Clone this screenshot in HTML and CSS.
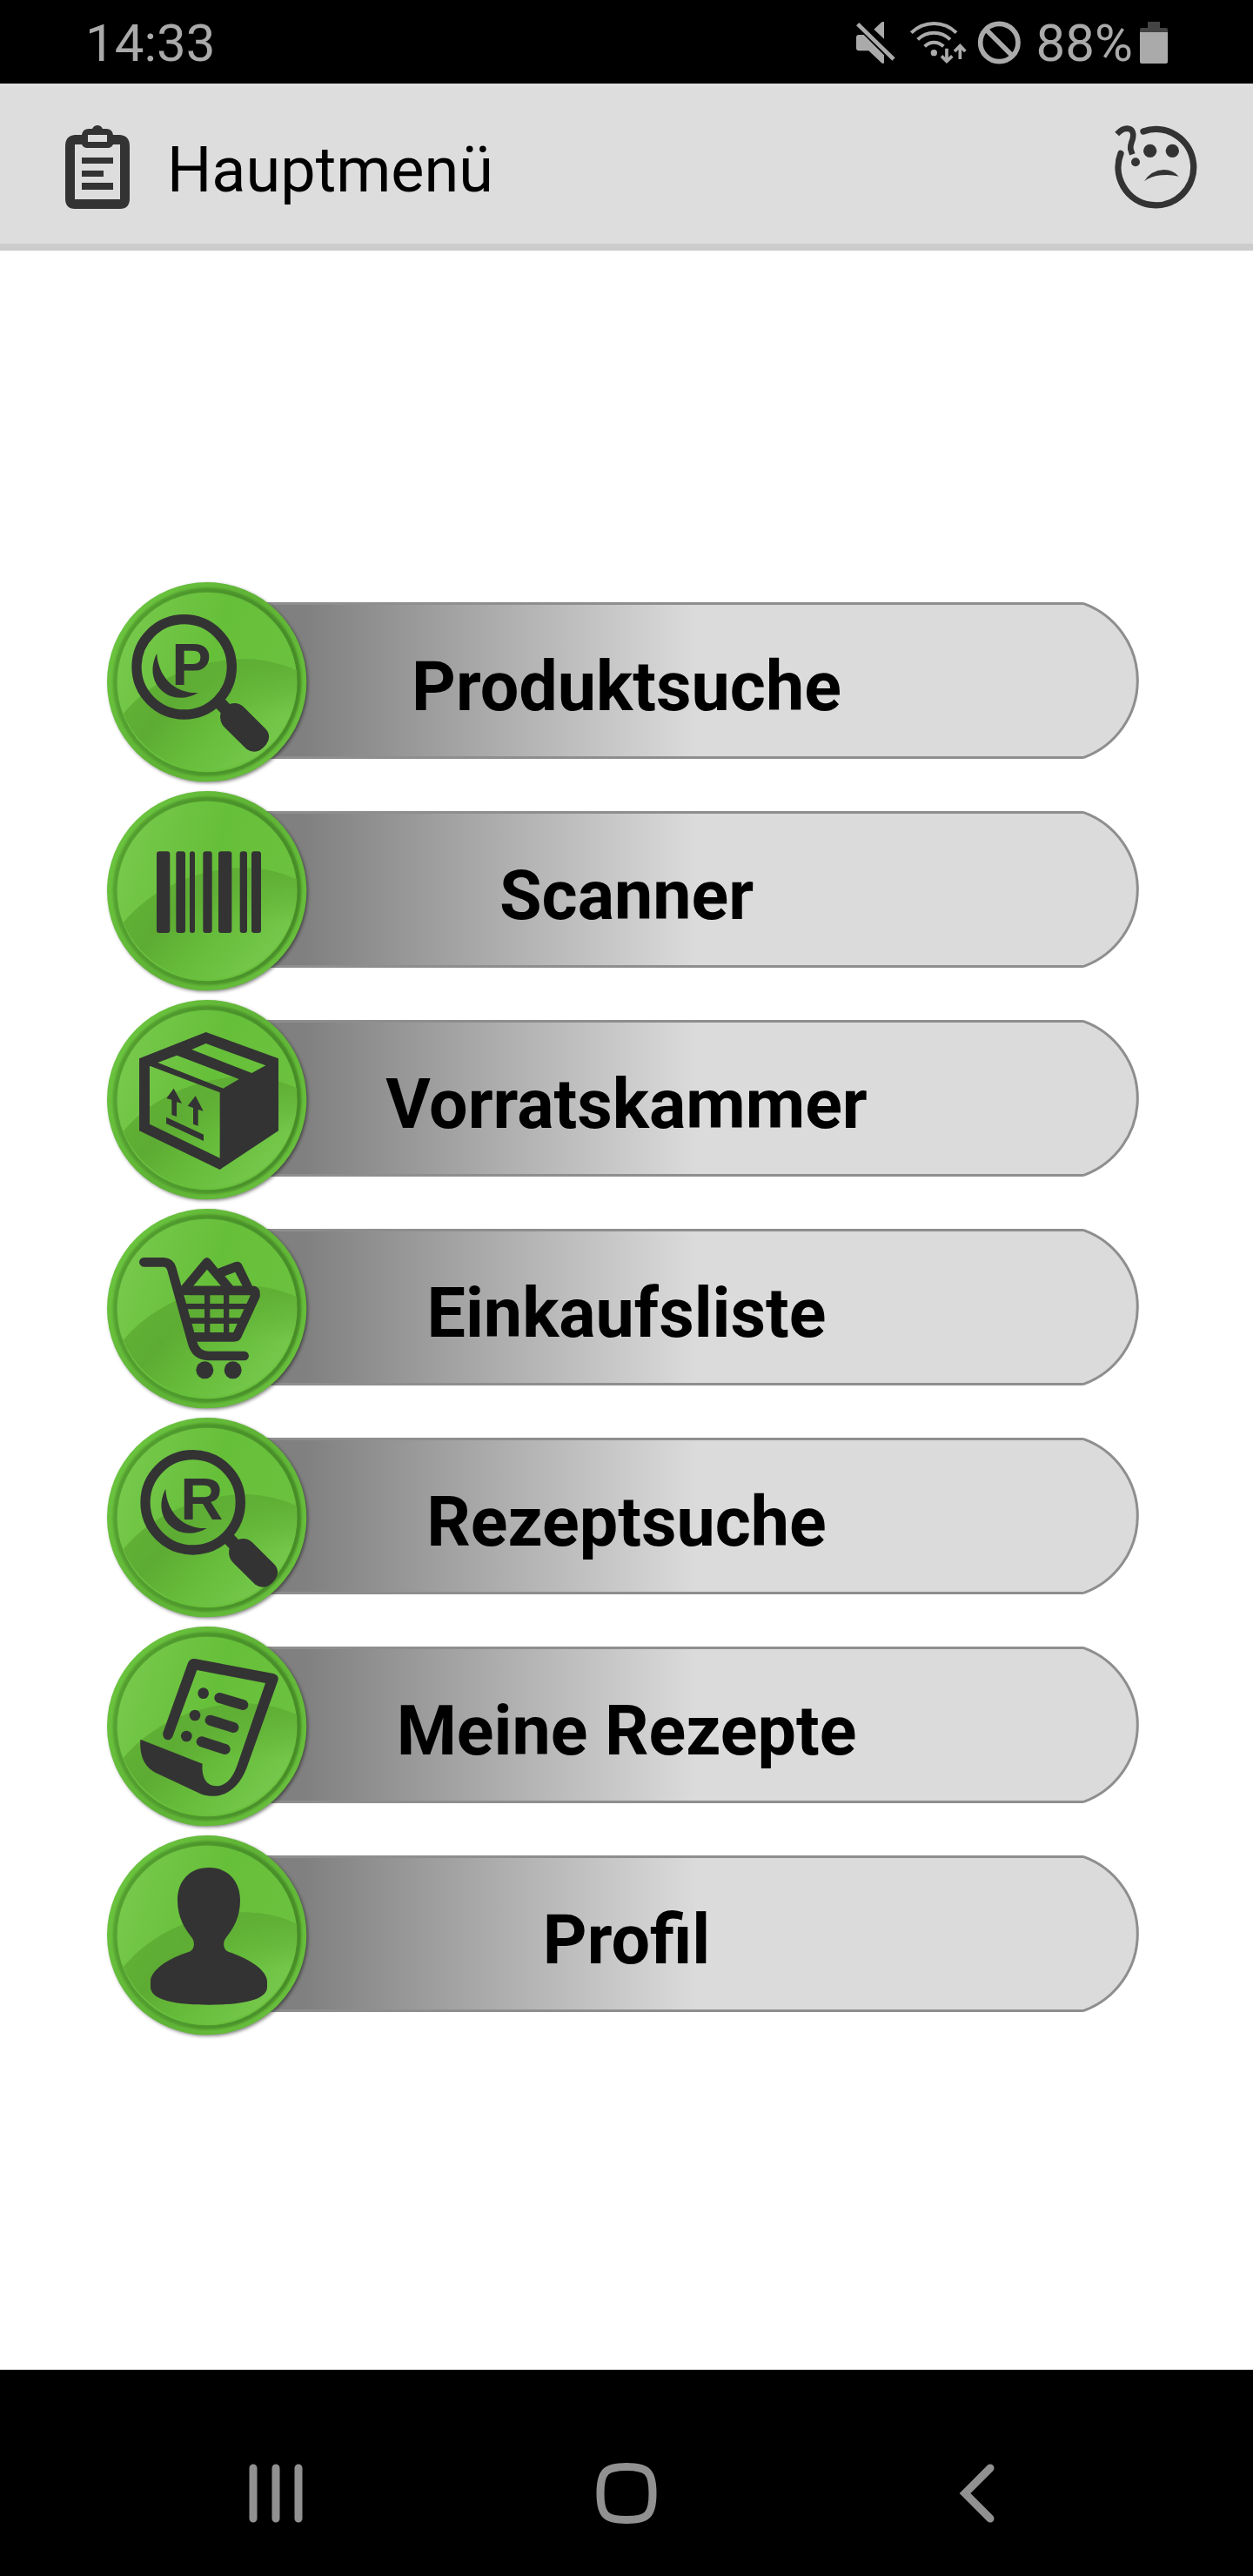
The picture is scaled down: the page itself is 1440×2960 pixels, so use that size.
FILE: index.html
```html
<!DOCTYPE html>
<html lang="de">
<head>
<meta charset="utf-8">
<meta name="viewport" content="width=device-width, initial-scale=1">
<title>Hauptmenü</title>
<link rel="stylesheet" href="styles.css">
</head>
<body>
<svg class="defs" aria-hidden="true">
  <defs>
    <linearGradient id="rim" x1="0" y1="0.2" x2="1" y2="0.8">
      <stop offset="0" stop-color="#6cc63f"/>
      <stop offset="0.5" stop-color="#5fb336"/>
      <stop offset="1" stop-color="#69c03d"/>
    </linearGradient>
    <linearGradient id="groove" x1="0" y1="0" x2="1" y2="0">
      <stop offset="0" stop-color="#54a030"/>
      <stop offset="1" stop-color="#468c28"/>
    </linearGradient>
    <linearGradient id="face" x1="0" y1="0.3" x2="1" y2="0.6">
      <stop offset="0" stop-color="#77c94c"/>
      <stop offset="0.5" stop-color="#66bf39"/>
      <stop offset="1" stop-color="#6cc23f"/>
    </linearGradient>
    <linearGradient id="shade" x1="0" y1="0.2" x2="1" y2="0.75">
      <stop offset="0" stop-color="#63b437"/>
      <stop offset="0.3" stop-color="#5dab33"/>
      <stop offset="0.55" stop-color="#66bc3a"/>
      <stop offset="1" stop-color="#79cb50"/>
    </linearGradient>
    <linearGradient id="shade-top" x1="0" y1="0" x2="0" y2="1">
      <stop offset="0" stop-color="#5fae35"/>
      <stop offset="0.5" stop-color="#5fae35" stop-opacity="0"/>
    </linearGradient>
    <filter id="soft" x="-10%" y="-10%" width="120%" height="120%"><feGaussianBlur stdDeviation="7"/></filter>
    <filter id="softer" x="-10%" y="-10%" width="120%" height="120%"><feGaussianBlur stdDeviation="3"/></filter>
    <symbol id="disc" viewBox="30 15 720 720">
      <circle cx="388" cy="376" r="342" fill="#000" opacity="0.55" filter="url(#soft)"/>
      <circle cx="383" cy="371" r="344" fill="url(#rim)"/>
      <circle cx="384" cy="371" r="316" fill="none" stroke="url(#groove)" stroke-width="18" filter="url(#softer)"/>
      <circle cx="384" cy="372" r="310" fill="url(#face)"/>
      <path d="M95 480C190 365 350 292 520 292Q610 294 691 330A310 310 0 0 1 95 480Z" fill="url(#shade)"/>
      <path d="M95 480C190 365 350 292 520 292Q610 294 691 330A310 310 0 0 1 95 480Z" fill="url(#shade-top)"/>
    </symbol>
    <symbol id="lens" viewBox="30 15 720 720">
      <circle cx="335" cy="319" r="164" fill="none" stroke="#333" stroke-width="34"/>
      <path d="M241 272C244 350 300 412 383 408C345 432 290 433 257 400C220 365 219 315 241 272Z"/>
      <path d="M442 458L474 428L492 447Q520 437 542 459L615 532Q639 558 617 587Q586 626 550 602L474 527Q454 507 461 478Z"/>
    </symbol>
    <symbol id="cap" viewBox="0 0 66 180">
      <path d="M0 1.500A94 94 0 0 1 0 178.500" fill="#dbdbdb" stroke="#8e8e8e" stroke-width="3"/>
    </symbol>
  </defs>
</svg>

<div class="screen">
  <div class="status">
    <span class="status-time">14:33</span>
    <div class="status-icons">
      <svg width="52" height="50" viewBox="120 72 156 150" fill="#aaa" role="img" aria-label="Stumm">
        <path d="M225 75V134L190 101L217 76ZM138 120H155L225 190V218H218L172 175H138Q129 175 129 165V130Q129 120 138 120Z"/>
        <path d="M134 83L258 204" stroke="#aaa" stroke-width="14"/>
      </svg>
      <svg width="66" height="50" viewBox="312 72 198 150" fill="none" stroke="#aaa" stroke-width="12" role="img" aria-label="WLAN">
        <path d="M319 113Q352 81 397 81T474 113M341 136Q365 113 397 113T453 136M365 160Q379 146 397 146T430 160"/>
        <circle cx="397" cy="182" r="11" fill="#aaa" stroke="none"/>
        <path d="M441 167V208M423 193L441 211L460 193M487 204V160M468 177L487 158L505 177" stroke-width="11"/>
      </svg>
      <svg width="52" height="50" viewBox="546 72 156 150" fill="none" stroke="#aaa" stroke-width="17" role="img" aria-label="Nicht stören">
        <circle cx="622" cy="147" r="65"/><path d="M577 102L667 192"/>
      </svg>
      <div class="battery">
        <span class="battery-level">88%</span>
        <svg width="32" height="50" viewBox="1110 72 96 150" role="img" aria-label="Akku">
          <path d="M1137 75H1179V96H1200Q1206 96 1206 102V111H1110V102Q1110 96 1116 96H1137Z" fill="#444"/>
          <path d="M1110 111H1206V213Q1206 219 1200 219H1116Q1110 219 1110 213Z" fill="#aaa"/>
        </svg>
      </div>
    </div>
  </div>

  <header class="bar">
    <svg width="76" height="98" viewBox="74 143 76 98" fill="#333" aria-hidden="true">
      <path fill-rule="evenodd" d="M86 155H94Q95 148 102 148H106Q108 144 112 144T118 148H122Q129 148 130 155H138Q149 156 149 168V228Q149 240 138 240H86Q75 240 75 228V168Q75 156 86 155ZM86 166V229H138V166H130Q128 170 124 170H100Q96 170 94 166ZM101 155V163H123V155Z"/>
      <path d="M94 181H130V188H94ZM94 196H119V203H94ZM94 210H130V218H94Z"/>
    </svg>
    <h1>Hauptmenü</h1>
    <button class="icon-button help" type="button" aria-label="Hilfe">
      <svg width="96" height="98" viewBox="1020 429 288 294" fill="none" stroke="#333" stroke-width="22" aria-hidden="true">
        <path d="M1119 453A130 131 0 1 1 1041 529" stroke-linecap="round"/>
        <path d="M1028 462Q1046 443 1063 443C1083 444 1086 461 1083 475C1079 494 1073 497 1075 514L1081 532" stroke-width="20"/>
        <g fill="#333" stroke="none">
          <circle cx="1092" cy="559" r="15"/><circle cx="1142" cy="520" r="23"/><circle cx="1219" cy="520" r="23"/>
          <path d="M1122 625Q1145 587 1190 585Q1221 585 1241 608Q1212 600 1180 604Q1146 607 1122 625Z"/>
        </g>
      </svg>
    </button>
  </header>

  <main>
    <nav class="menu" aria-label="Hauptmenü">
      <button class="item" type="button">
        <span class="pill"><span class="pill-body"></span><svg width="66" height="180"><use href="#cap"/></svg></span>
        <svg class="badge" viewBox="30 15 720 720" fill="#333" aria-hidden="true"><use href="#disc" x="30" y="15" width="720" height="720"/><use href="#lens" x="0" y="15" width="720" height="720"/><text class="glyph" x="262" y="380">P</text></svg>
        <span class="label">Produktsuche</span>
      </button>
      <button class="item" type="button">
        <span class="pill"><span class="pill-body"></span><svg width="66" height="180"><use href="#cap"/></svg></span>
        <svg class="badge" viewBox="30 15 720 720" fill="#333" aria-hidden="true"><use href="#disc" x="30" y="15" width="720" height="720"/>
          <rect x="210" y="235" width="46" height="281" rx="9"/><rect x="277" y="235" width="32" height="281" rx="9"/><rect x="324" y="235" width="18" height="281" rx="8"/><rect x="370" y="235" width="31" height="281" rx="9"/><rect x="423" y="235" width="46" height="281" rx="9"/><rect x="497" y="235" width="25" height="281" rx="9"/><rect x="537" y="235" width="33" height="281" rx="9"/></svg>
        <span class="label">Scanner</span>
      </button>
      <button class="item" type="button">
        <span class="pill"><span class="pill-body"></span><svg width="66" height="180"><use href="#cap"/></svg></span>
        <svg class="badge" viewBox="30 15 720 720" fill="#333" aria-hidden="true"><use href="#disc" x="30" y="15" width="720" height="720"/>
          <path fill-rule="evenodd" d="M380 138L630 229V478L428 612L150 478V229ZM186 254V455L428 572V346ZM214 243L439 332L494 300L280 218ZM331 198L538 279L586 253L380 177Z"/>
          <path d="M269 332L297 383L279 379V429L262 423V371L244 366ZM344 358L371 410L353 405V461L336 455V399L317 392ZM243 431L372 491V513L243 453Z"/></svg>
        <span class="label">Vorratskammer</span>
      </button>
      <button class="item" type="button">
        <span class="pill"><span class="pill-body"></span><svg width="66" height="180"><use href="#cap"/></svg></span>
        <svg class="badge" viewBox="30 15 720 720" fill="#333" aria-hidden="true"><use href="#disc" x="30" y="15" width="720" height="720"/>
          <g fill="none" stroke="#333" stroke-width="32" stroke-linecap="round" stroke-linejoin="round"><path d="M166 211H234Q256 212 262 234L333 488Q345 533 388 534H512"/><path d="M290 309H545Q552 312 550 328L488 462Q486 469 476 469H335"/></g>
          <path d="M295 293L370 203Q383 187 397 203L421 233L482 210Q496 206 504 219L540 293V300H290ZM336 293H432L384 236ZM445 259L474 293H506L481 245Z" fill-rule="evenodd"/>
          <path d="M375 310H394V460H375ZM441 310H460V460H441ZM305 354H530V373H305ZM315 403H510V423H315Z"/>
          <circle cx="376" cy="583" r="30"/><circle cx="473" cy="583" r="30"/></svg>
        <span class="label">Einkaufsliste</span>
      </button>
      <button class="item" type="button">
        <span class="pill"><span class="pill-body"></span><svg width="66" height="180"><use href="#cap"/></svg></span>
        <svg class="badge" viewBox="30 15 720 720" fill="#333" aria-hidden="true"><use href="#disc" x="30" y="15" width="720" height="720"/><use href="#lens" x="30" y="15" width="720" height="720"/><text class="glyph" x="292" y="378">R</text></svg>
        <span class="label">Rezeptsuche</span>
      </button>
      <button class="item" type="button">
        <span class="pill"><span class="pill-body"></span><svg width="66" height="180"><use href="#cap"/></svg></span>
        <svg class="badge" viewBox="30 15 720 720" fill="#333" aria-hidden="true"><use href="#disc" x="30" y="15" width="720" height="720"/>
          <path d="M232 393L318 152Q325 136 342 138L612 189Q631 194 629 211L520 515C492 590 435 627 365 605L205 530C170 512 150 475 154 416L368 500C364 540 378 576 414 577C455 577 475 540 488 505L585 222L349 177L266 404Q260 418 247 418Q230 414 232 393Z"/>
          <circle cx="371" cy="257" r="19"/><circle cx="342" cy="333" r="19"/><circle cx="313" cy="405" r="19"/>
          <path d="M427 273L508 297M395 350L475 375M365 424L446 450" stroke="#333" stroke-width="36" stroke-linecap="round"/></svg>
        <span class="label">Meine Rezepte</span>
      </button>
      <button class="item" type="button">
        <span class="pill"><span class="pill-body"></span><svg width="66" height="180"><use href="#cap"/></svg></span>
        <svg class="badge" viewBox="30 15 720 720" fill="#333" aria-hidden="true"><use href="#disc" x="30" y="15" width="720" height="720"/>
          <path d="M390 138C457 138 498 185 498 250C498 310 474 348 450 379C437 395 438 422 460 429C530 452 591 493 591 530V550C591 590 520 611 390 611S189 590 189 550V530C189 493 250 450 320 429C342 421 343 395 331 379C307 348 282 310 282 250C282 185 323 138 390 138Z"/></svg>
        <span class="label">Profil</span>
      </button>
    </nav>
  </main>

  <footer class="system-nav">
    <button class="icon-button" type="button" aria-label="Letzte Apps"><svg width="72" height="70" viewBox="0 0 72 70"><path d="M10 6V64M36 6V64M62 6V64"/></svg></button>
    <button class="icon-button" type="button" aria-label="Startseite"><svg width="72" height="70" viewBox="0 0 72 70"><path d="M36 4.500C60 4.500 66 10 66 35S60 65.500 36 65.500S6 60 6 35S12 4.500 36 4.500Z"/></svg></button>
    <button class="icon-button" type="button" aria-label="Zurück"><svg width="72" height="70" viewBox="0 0 72 70"><path d="M51 6L22 35L51 64"/></svg></button>
  </footer>
</div>
</body>
</html>
```
FILE: styles.css
```css
* { box-sizing: border-box; }

body {
  margin: 0;
  background: #fff;
  color: #000;
  font-family: Roboto, "Liberation Sans", sans-serif;
}

button {
  padding: 0;
  border: 0;
  background: none;
  color: inherit;
  font: inherit;
  cursor: pointer;
}

svg { display: block; flex: none; }

.defs { position: absolute; width: 0; height: 0; }

.screen {
  display: flex;
  flex-direction: column;
  min-height: 100vh;
}

.status {
  display: flex;
  align-items: center;
  justify-content: space-between;
  height: 96px;
  padding: 2px 98px 0;
  background: #000;
  color: #aaa;
  font-size: 60px;
  line-height: 72px;
}

.status-time,
.battery-level { padding-top: 2px; }

.status-icons {
  display: flex;
  align-items: center;
  gap: 12px;
}

.battery {
  display: flex;
  align-items: center;
  gap: 8px;
  margin-left: 4px;
}

.bar {
  display: flex;
  align-items: center;
  gap: 42px;
  height: 192px;
  padding: 4px 63px 0 74px;
  border-top: 4px solid #e0e0e0;
  border-bottom: 8px solid #ccc;
  background: #ddd;
}

.bar h1 {
  margin: 0;
  padding-top: 8px;
  font-size: 72px;
  font-weight: 400;
  line-height: 84px;
}

.help { margin-left: auto; }

main {
  display: flex;
  flex: 1;
  flex-direction: column;
  justify-content: center;
  padding: 40px 120px 42px;
}

.menu { display: flex; flex-direction: column; }

.item {
  display: grid;
  align-items: center;
  width: 100%;
  height: 240px;
}

.item > * { grid-area: 1 / 1; }

.pill {
  display: flex;
  height: 180px;
  margin: 0 9px 6px 120px;
}

.pill-body {
  flex: 1;
  border-top: 3px solid #8e8e8e;
  border-bottom: 3px solid #8e8e8e;
  background: linear-gradient(90deg, #808080 110px, #dbdbdb 560px);
}

.badge {
  width: 240px;
  height: 240px;
}

.glyph {
  font-family: "Liberation Sans", sans-serif;
  font-size: 204px;
  font-weight: 700;
}

.label {
  padding-top: 8px;
  font-size: 79px;
  font-weight: 700;
  line-height: 96px;
  text-align: center;
}

.system-nav {
  display: grid;
  grid-template-columns: repeat(3, 1fr);
  justify-items: center;
  padding: 107px 8% 60px;
  background: #000;
}

.system-nav svg {
  fill: none;
  stroke: #919191;
  stroke-width: 9px;
  stroke-linecap: round;
}
```
